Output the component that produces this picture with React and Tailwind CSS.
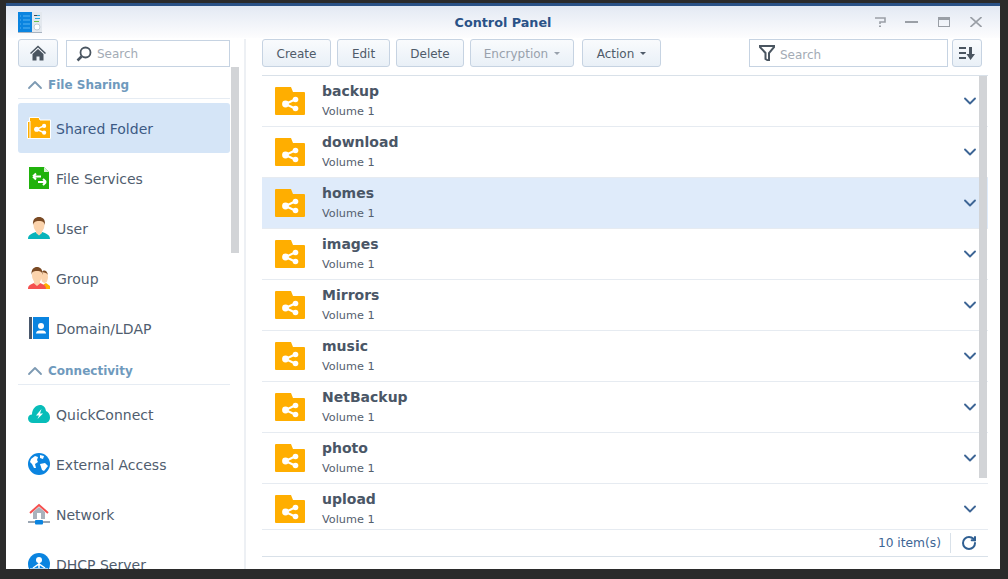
import { ChevronDown, ChevronUp, RotateCw } from "lucide-react";

const folders = ["backup", "download", "homes", "images", "Mirrors", "music", "NetBackup", "photo", "upload"];

function ShareGlyph({ x = 0, y = 0 }) {
  return (
    <g transform={`translate(${x} ${y})`} fill="#fff" stroke="#fff">
      <path d="M3.5 7 L13 2.5 M3.5 7 L13 11.5" strokeWidth="2" fill="none" />
      <circle cx="3.5" cy="7" r="3.4" stroke="none" />
      <circle cx="13.5" cy="2.5" r="2.8" stroke="none" />
      <circle cx="13.5" cy="11.5" r="2.8" stroke="none" />
    </g>
  );
}

function FolderIcon() {
  return (
    <svg width="30" height="28" viewBox="0 0 30 28" className="shrink-0">
      <path d="M1 0H16L18 5H29a1 1 0 0 1 1 1V27a1 1 0 0 1-1 1H1a1 1 0 0 1-1-1V1a1 1 0 0 1 1-1Z" fill="#ffae00" />
      <ShareGlyph x={7} y={10} />
    </svg>
  );
}

function SharedFolderIcon() {
  return (
    <svg width="24" height="22" viewBox="0 0 24 22">
      <path d="M0.5 4.5H2.5V0.5H12L13 3H23.5V21.5H0.5Z" fill="#ffae00" stroke="#fff" />
      <path d="M3 4V21" stroke="#fff" strokeWidth="1" />
      <g transform="translate(7 7) scale(0.75)">
        <ShareGlyph />
      </g>
    </svg>
  );
}

function FileServicesIcon() {
  return (
    <svg width="20" height="22" viewBox="0 0 20 22">
      <path d="M0 0H15L20 5V22H0Z" fill="#20b20c" />
      <path d="M15 0L20 5H15Z" fill="#d8f2d4" />
      <path d="M4 9.500H12M4 9.500L7 6.500M4 9.500L7 12.500M17 15H9M17 15L14 12M17 15L14 18" stroke="#fff" strokeWidth="2" fill="none" />
    </svg>
  );
}

function UserIcon() {
  return (
    <svg width="22" height="22" viewBox="0 0 22 22">
      <path d="M0 22C0 17.5 4 16.5 8 15H14C18 16.5 22 17.5 22 22Z" fill="#08b4bb" />
      <path d="M8 13H14V16L11 18.5L8 16Z" fill="#fbd3ac" />
      <ellipse cx="11" cy="8" rx="5.5" ry="7.5" fill="#fbd3ac" />
      <path d="M5 8C4.5 2 7.5 0 11 0S17.5 2 17 8C16 5 15 4 11 4S6 5 5 8Z" fill="#7a4a24" />
    </svg>
  );
}

function GroupIcon() {
  return (
    <svg width="22" height="22" viewBox="0 0 22 22">
      <path d="M14 22C14 18 16 17 18 16L22 19V22Z" fill="#ffae00" />
      <ellipse cx="16.5" cy="10" rx="3.5" ry="6" fill="#fbd3ac" />
      <path d="M14 5C15 2.5 19 2.5 20 8C19 6 17 5.5 14 5Z" fill="#7a4a24" />
      <path d="M0 22C0 18 3 17.5 6 16H12C15 17.5 18 18 18 22Z" fill="#f5504f" />
      <path d="M6 13H12V16.5L9 19L6 16.5Z" fill="#fbd3ac" />
      <ellipse cx="9" cy="8.5" rx="5" ry="7" fill="#fbd3ac" />
      <path d="M3.5 8C3 2 6 0 9 0S15 2 14.5 8C14 5 13 4 9 4S4 5 3.5 8Z" fill="#7a4a24" />
    </svg>
  );
}

function DomainIcon() {
  return (
    <svg width="20" height="22" viewBox="0 0 20 22">
      <rect x="0" y="0" width="3" height="22" fill="#49586c" />
      <rect x="4" y="0" width="16" height="22" fill="#0a84e0" />
      <circle cx="12" cy="9" r="3" fill="#fff" />
      <path d="M7 16.5C7 14 9 13.5 12 13.5S17 14 17 16.5Z" fill="#fff" />
    </svg>
  );
}

function QuickConnectIcon() {
  return (
    <svg width="22" height="18" viewBox="0 0 22 18">
      <path d="M5 18C2 18 0 16 0 13.5C0 11 2 9.5 4 9.5C4 4 8 0 12 0C15.500 0 17.500 2.500 18 6C20.500 7 22 9.500 22 12.500C22 15.500 20 18 17 18Z" fill="#08bdb9" />
      <path d="M13.500 4L8 10.500H11L9.500 14L15 8.500H12Z" fill="#fff" />
    </svg>
  );
}

function GlobeIcon() {
  return (
    <svg width="22" height="22" viewBox="0 0 22 22">
      <circle cx="11" cy="11" r="11" fill="#0a84e0" />
      <path d="M3 6L7 3L10 4L9 7L10 9L7 11L8 15L6 15L4 11L2 9Z" fill="#fff" />
      <path d="M12 11L17 10L20 13L16 18L14 17L13 14Z" fill="#fff" />
      <path d="M12 2L16 3L15 6L12 5Z" fill="#fff" />
    </svg>
  );
}

function NetworkIcon() {
  return (
    <svg width="22" height="22" viewBox="0 0 22 22">
      <path d="M5 9L11 4L17 9V16H5Z" fill="#a9b2bc" />
      <path d="M2 10L11 2L20 10" stroke="#f5504f" strokeWidth="2" fill="none" />
      <rect x="9" y="10" width="4" height="6" fill="#fff" />
      <rect x="0" y="18" width="22" height="2" fill="#9aa6b3" />
      <rect x="7" y="17" width="8" height="4.500" rx="1" fill="#0a84e0" />
    </svg>
  );
}

function DhcpIcon() {
  return (
    <svg width="22" height="22" viewBox="0 0 22 22">
      <circle cx="11" cy="11" r="11" fill="#0a84e0" />
      <circle cx="11" cy="7" r="3" fill="#fff" />
      <path d="M11 9V15M5 15L11 11L17 15" stroke="#fff" strokeWidth="1.500" fill="none" />
      <rect x="2" y="15" width="18" height="4" fill="#9fd0f5" />
    </svg>
  );
}

function NavItem({ icon, label, active }) {
  return (
    <div className={`h-[50px] flex items-center rounded-[3px] ${active ? "bg-[#d5e5f7] text-[#3c5a85]" : "text-[#505d6e]"}`}>
      <div className="w-[38px] flex justify-center shrink-0 pl-[3px]">{icon}</div>
      <span className="text-[14px] pt-[2px]">{label}</span>
    </div>
  );
}

function SectionHead({ label }) {
  return (
    <div className="h-[32px] pt-[5px] flex items-center border-b border-[#e6ecf3] text-[#6f9abd] font-bold text-[12px]">
      <ChevronUp size={24} strokeWidth={1.8} className="ml-[5px] mr-[1px] text-[#7d9ab3]" />
      {label}
    </div>
  );
}

function Button({ children, disabled, caret }) {
  return (
    <div
      className={`h-[28px] flex items-center justify-center gap-[6px] rounded-[3px] border border-[#c6d3e2] bg-gradient-to-b from-[#f9fbfd] to-[#e9f0f7] text-[12px] ${
        disabled ? "text-[#98a1ac]" : "text-[#4f5b69]"
      }`}
    >
      <span className="pt-[2px]">{children}</span>
      {caret && <span className={`mt-[1px] border-x-[3px] border-t-[3px] border-x-transparent ${disabled ? "border-t-[#98a1ac]" : "border-t-[#4f5b69]"}`} />}
    </div>
  );
}

function FolderRow({ name, active }) {
  return (
    <div className={`h-[51px] shrink-0 flex items-center border-b border-[#e6ebf1] pl-[13px] pr-[8px] ${active ? "bg-[#dfebfa]" : ""}`}>
      <FolderIcon />
      <div className="ml-[17px] flex-1 -mt-[2px]">
        <div className="text-[14px] font-bold leading-[20px] text-[#4a5666]">{name}</div>
        <div className="text-[11.25px] leading-[16px] mt-[3px] text-[#54606e]">Volume 1</div>
      </div>
      <ChevronDown size={20} strokeWidth={2.25} className="text-[#3d6595]" />
    </div>
  );
}

export default function App() {
  return (
    <div className="w-[1008px] h-[579px] bg-[#2b2b2b] pl-[6px] pt-[3px] overflow-hidden font-['DejaVu_Sans',sans-serif]">
      <div className="w-[994px] h-[566px] bg-white border-t-[3px] border-[#2b5286] flex flex-col overflow-hidden">
        <header className="h-[32px] shrink-0 pt-[3px] pb-[2px] relative flex items-center justify-center bg-gradient-to-b from-[#e3e9f3] to-[#fdfdfe]">
          <svg width="24" height="21" viewBox="0 0 24 21" className="absolute left-[12px] top-[6px]">
            <rect width="14" height="20" fill="#0a84e0" />
            <rect x="14" width="10" height="20" fill="#e3e8ee" />
            <rect y="20" width="24" height="1" fill="#a8b3c0" />
            <path d="M2 4H3M5 4H12M2 8H3M5 8H12M2 12H3M5 12H12M2 16H3M5 16H12" stroke="#57b4f3" strokeWidth="1" />
            <path d="M16 3.500H19" stroke="#3f4b58" strokeWidth="1" />
            <path d="M19 3.500H22M17 6.500H22" stroke="#22a8e0" strokeWidth="1" />
            <path d="M16 9.500H21" stroke="#6cc04a" strokeWidth="1" />
            <circle cx="19" cy="15" r="3" fill="#fff" stroke="#c3ccd6" />
          </svg>
          <span className="text-[12.75px] font-bold text-[#2a5287]">Control Panel</span>
          <div className="absolute right-0 top-0 h-full">
            <svg width="11" height="10" viewBox="0 0 11 10" className="absolute right-[114px] top-[11px]">
              <path d="M0 1H10V5H5V7" fill="none" stroke="#9a9fa6" strokeWidth="1.600" />
              <rect x="4" y="8.500" width="2" height="1.500" fill="#9a9fa6" />
            </svg>
            <span className="absolute right-[82px] top-[15px] w-[13px] h-[2px] bg-[#9a9fa6]" />
            <span className="absolute right-[50px] top-[11px] w-[12px] h-[10px] border border-[#9a9fa6] border-t-[3px]" />
            <svg width="12" height="10" viewBox="0 0 12 10" className="absolute right-[18px] top-[11px]">
              <path d="M0.500 0L11.500 10M11.500 0L0.500 10" stroke="#9a9fa6" strokeWidth="1.600" />
            </svg>
          </div>
        </header>

        <div className="flex-1 flex min-h-0 relative">
          <aside className="w-[240px] shrink-0 border-r-2 border-[#edf0f4] pl-[12px] overflow-hidden relative mt-[1px]">
            <div className="flex gap-[8px] h-[28px]">
              <div className="w-[40px] flex items-center justify-center rounded-[3px] border border-[#c6d3e2] bg-gradient-to-b from-[#f9fbfd] to-[#e9f0f7]">
                <svg width="16" height="16" viewBox="0 0 16 16">
                  <path d="M8 0.500L0 8L1 9L8 2.500L15 9L16 8Z" fill="#4a5560" />
                  <path d="M2.500 9L8 4L13.500 9V15.500H9.500V11.500H6.500V15.500H2.500Z" fill="#4a5560" />
                </svg>
              </div>
              <div className="w-[164px] mt-[1px] h-[27px] flex items-center border border-[#c6d3e2] pl-[9px] text-[12px] text-[#a3abb5]">
                <svg width="16" height="16" viewBox="0 0 16 16" className="mr-[5px]">
                  <circle cx="9.500" cy="6.500" r="5" fill="none" stroke="#4a5560" strokeWidth="1.800" />
                  <path d="M5.500 10.500L1.500 14.500" stroke="#4a5560" strokeWidth="2.500" />
                </svg>
                Search
              </div>
            </div>
            <div className="w-[212px]">
              <SectionHead label="File Sharing" />
              <div className="h-[4px]" />
              <NavItem active icon={<SharedFolderIcon />} label="Shared Folder" />
              <NavItem icon={<FileServicesIcon />} label="File Services" />
              <NavItem icon={<UserIcon />} label="User" />
              <NavItem icon={<GroupIcon />} label="Group" />
              <NavItem icon={<DomainIcon />} label="Domain/LDAP" />
              <SectionHead label="Connectivity" />
              <div className="h-[4px]" />
              <NavItem icon={<QuickConnectIcon />} label="QuickConnect" />
              <NavItem icon={<GlobeIcon />} label="External Access" />
              <NavItem icon={<NetworkIcon />} label="Network" />
              <NavItem icon={<DhcpIcon />} label="DHCP Server" />
            </div>
            <div className="absolute left-[225px] top-[28px] w-[8px] h-[186px] bg-[#d2d4d7]" />
          </aside>

          <main className="flex-1 min-w-0 pl-[16px] pr-[12px] flex flex-col mt-[1px]">
            <div className="h-[28px] flex shrink-0 pr-[6px]">
              <div className="flex gap-[6px]">
                <div className="w-[69px]"><Button>Create</Button></div>
                <div className="w-[53px]"><Button>Edit</Button></div>
                <div className="w-[68px]"><Button>Delete</Button></div>
                <div className="w-[104px]"><Button disabled caret>Encryption</Button></div>
                <div className="w-[79px] ml-[2px]"><Button caret>Action</Button></div>
              </div>
              <div className="ml-auto flex gap-[4px]">
                <div className="w-[199px] h-[28px] flex items-center border border-[#c6d3e2] pl-[9px] text-[12px] text-[#a3abb5]">
                  <svg width="16" height="16" viewBox="0 0 16 16" className="mr-[5px]">
                    <path d="M0 1H16L10 8V16L6.500 14V8Z" fill="none" stroke="#4a5560" strokeWidth="2" />
                  </svg>
                  <span className="pt-[3px]">Search</span>
                </div>
                <div className="w-[30px] flex items-center justify-center rounded-[3px] border border-[#c6d3e2] bg-gradient-to-b from-[#f9fbfd] to-[#e9f0f7]">
                  <svg width="16" height="13" viewBox="0 0 16 13" fill="#4a5560">
                    <rect x="0" y="0" width="7" height="2" />
                    <rect x="0" y="5" width="7" height="2" />
                    <rect x="0" y="10" width="7" height="2" />
                    <path d="M10 0H13V7H16L11.500 13L7.500 7H10Z" />
                  </svg>
                </div>
              </div>
            </div>

            <div className="mt-[8px] flex-1 min-h-0 flex flex-col border-t border-[#d9e1e9] relative">
              <div className="flex-1 min-h-0 flex flex-col overflow-hidden">
                {folders.map((name) => (
                  <FolderRow key={name} name={name} active={name === "homes"} />
                ))}
              </div>
              <div className="h-[28px] shrink-0 flex items-center justify-end border-y border-t-[#e6ebf1] border-b-[#d9e1e9] pr-[11px] text-[12.25px] text-[#3d6595]">
                10 item(s)
                <span className="w-px h-[20px] bg-[#d9e1e9] ml-[9px] mr-[10px]" />
                <RotateCw size={16} strokeWidth={3} className="text-[#2f5f92]" />
              </div>
              <div className="absolute right-[1px] top-0 w-[8px] h-[402px] bg-[#d2d4d7]" />
            </div>
            <div className="h-[12px] shrink-0" />
          </main>
        </div>
      </div>
    </div>
  );
}
